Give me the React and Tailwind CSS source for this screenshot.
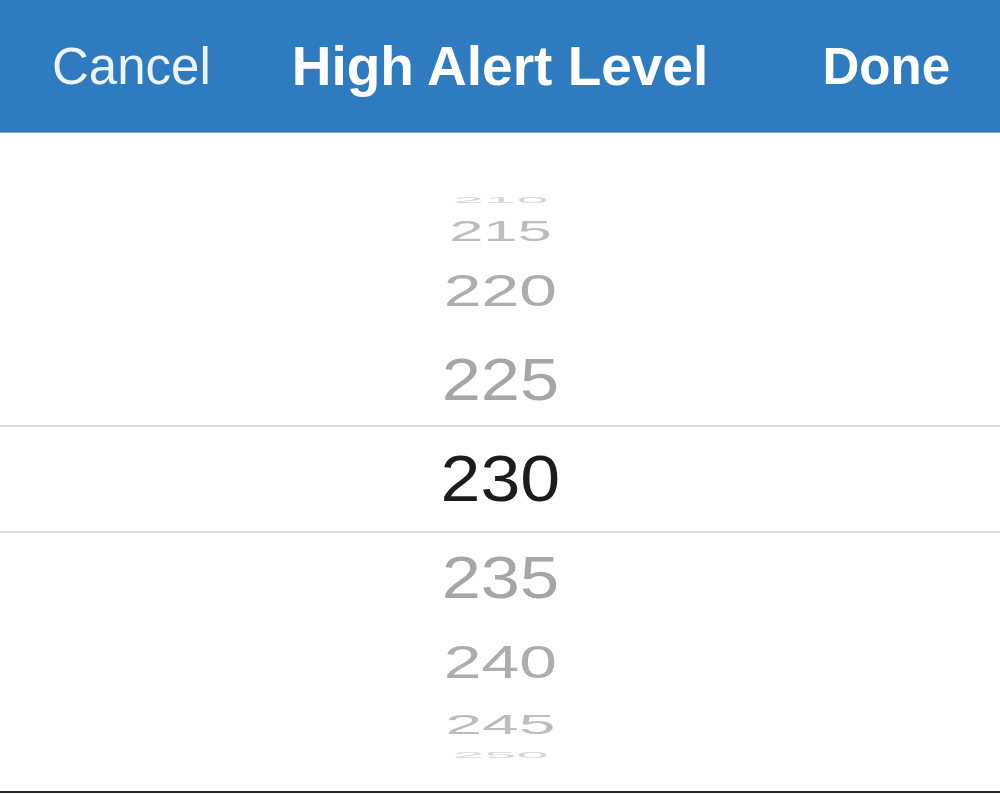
import React from "react";

const font = { fontFamily: '"Liberation Sans", Arial, sans-serif' };

// wheel rows: height of the slot, and how the glyphs are squashed/tinted
const rows = [
  { v: "210", h: "h-[30px]", cls: "text-[#d6d6d6] scale-x-[0.9] scale-y-[0.13] blur-[0.6px]" },
  { v: "215", h: "h-[32px]", cls: "text-[#bdbdbd] scale-x-[0.96] scale-y-[0.46] blur-[0.5px]" },
  { v: "220", h: "h-[88px]", cls: "text-[#adadad] scale-x-[1.06] scale-y-[0.7] blur-[0.4px]" },
  { v: "225", h: "h-[90px]", cls: "text-[#a6a6a6] scale-x-[1.1] scale-y-[0.92] blur-[0.4px]" },
];
const rowsBelow = [
  { v: "235", h: "h-[90px]", cls: "text-[#a6a6a6] scale-x-[1.1] scale-y-[0.92] blur-[0.4px]" },
  { v: "240", h: "h-[78px]", cls: "text-[#adadad] scale-x-[1.06] scale-y-[0.72] blur-[0.4px]" },
  { v: "245", h: "h-[46px]", cls: "text-[#bdbdbd] scale-x-[1.03] scale-y-[0.44] blur-[0.5px]" },
  { v: "250", h: "h-[16px]", cls: "text-[#d6d6d6] scale-x-[0.9] scale-y-[0.13] blur-[0.6px]" },
];

const WheelRow = ({ row }) => (
  <div className={`${row.h} flex items-center justify-center overflow-visible`}>
    <span className={`text-[64px] leading-none ${row.cls}`}>{row.v}</span>
  </div>
);

export default function App() {
  return (
    <div className="w-[1000px] h-[794px] bg-white flex flex-col overflow-hidden" style={font}>
      {/* Header */}
      <div className="h-[133px] shrink-0 bg-[#2f7bbf] border-b border-[#7fa9d4] grid grid-cols-[1fr_auto_1fr] items-center text-white">
        <div className="pl-[52px] text-[51px] leading-none text-[#eef4fb]">Cancel</div>
        <div className="text-[55px] leading-none font-bold">High Alert Level</div>
        <div className="pr-[50px] text-right text-[51px] leading-none font-bold">Done</div>
      </div>

      {/* Picker wheel */}
      <div className="flex-1 flex flex-col">
        <div className="h-[52px]" />
        {rows.map((r) => (
          <WheelRow key={r.v} row={r} />
        ))}
        <div className="h-[108px] border-y-2 border-[#dcdcdc] flex items-center justify-center">
          <span className="text-[64px] leading-none text-[#1c1c1c] scale-x-[1.12]">230</span>
        </div>
        {rowsBelow.map((r) => (
          <WheelRow key={r.v} row={r} />
        ))}
        <div className="flex-1" />
      </div>
      <div className="h-[2px] shrink-0 bg-[#2a2a2a]" />
      <div className="h-[1px] shrink-0 bg-white" />
    </div>
  );
}
